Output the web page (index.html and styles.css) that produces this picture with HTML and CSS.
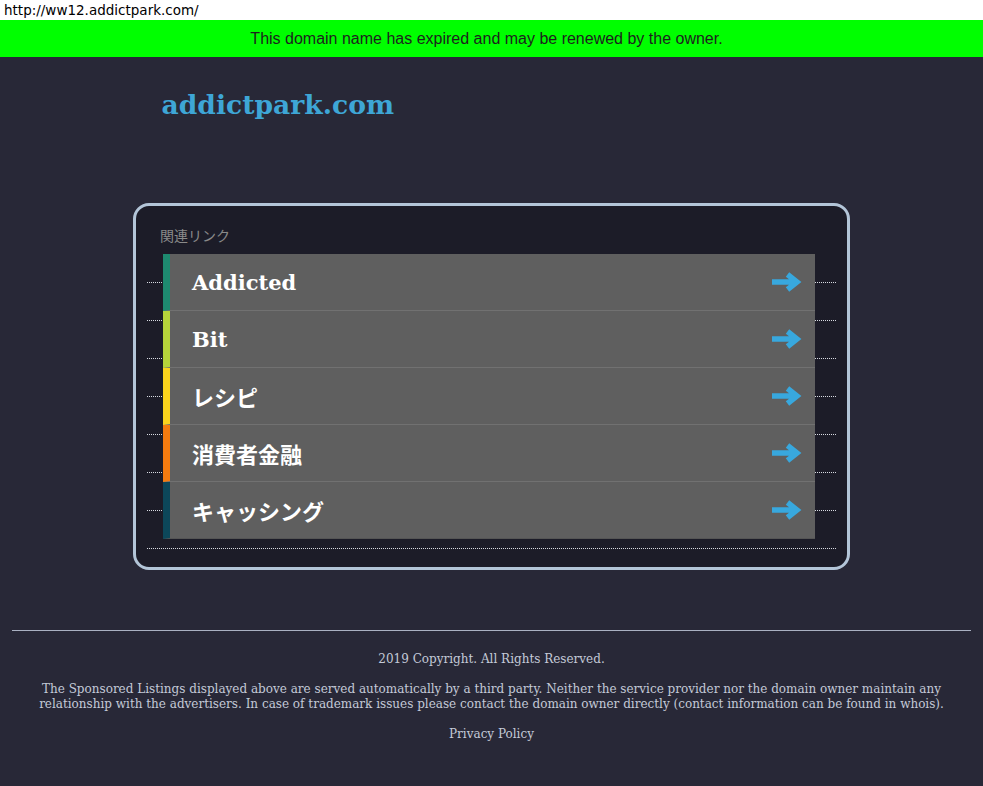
FILE: index.html
```html
<!DOCTYPE html>
<html lang="ja">
<head>
	<meta charset="UTF-8">
	<title>addictpark.com</title>
	<link rel="stylesheet" href="styles.css">
</head>
<body>
	<div class="urlBar">http://ww12.addictpark.com/</div>
	<div class="expired">This domain name has expired and may be renewed by the owner.</div>

	<div class="page">
		<h1 class="domain">addictpark.com</h1>
	</div>

	<div class="box">
		<div class="label">関連リンク</div>
		<div class="links">
			<div class="lines">
				<div class="line"></div>
				<div class="line"></div>
				<div class="line"></div>
				<div class="line"></div>
				<div class="line"></div>
				<div class="line"></div>
				<div class="line"></div>
				<div class="line last"></div>
			</div>
			<div class="rows">
				<a class="row c1" href="#"><span class="text latin">Addicted</span><svg class="arrow" viewBox="0 0 31 20"><path d="M0 10H24M15.5 2.5L25 10L15.5 17.5"/></svg></a>
				<a class="row c2" href="#"><span class="text latin">Bit</span><svg class="arrow" viewBox="0 0 31 20"><path d="M0 10H24M15.5 2.5L25 10L15.5 17.5"/></svg></a>
				<a class="row c3" href="#"><span class="text">レシピ</span><svg class="arrow" viewBox="0 0 31 20"><path d="M0 10H24M15.5 2.5L25 10L15.5 17.5"/></svg></a>
				<a class="row c4" href="#"><span class="text">消費者金融</span><svg class="arrow" viewBox="0 0 31 20"><path d="M0 10H24M15.5 2.5L25 10L15.5 17.5"/></svg></a>
				<a class="row c5" href="#"><span class="text">キャッシング</span><svg class="arrow" viewBox="0 0 31 20"><path d="M0 10H24M15.5 2.5L25 10L15.5 17.5"/></svg></a>
			</div>
		</div>
	</div>

	<div class="footer">
		<p>2019 Copyright. All Rights Reserved.</p>
		<p>The Sponsored Listings displayed above are served automatically by a third party. Neither the service provider nor the domain owner maintain any relationship with the advertisers. In case of trademark issues please contact the domain owner directly (contact information can be found in whois).</p>
		<p><a href="#">Privacy Policy</a></p>
	</div>
</body>
</html>
```

FILE: styles.css
```css
*{
	margin: 0;
	padding: 0;
	box-sizing: border-box;
}
body{
	background-color: #282837;
	font-family: "DejaVu Serif", "Noto Sans CJK JP", serif;
}
.urlBar{
	height: 20px;
	padding-left: 4px;
	background-color: #fff;
	color: #000;
	font-family: "DejaVu Sans", sans-serif;
	font-size: 13.5px;
	line-height: 20px;
}
.expired{
	height: 37px;
	padding-right: 10px;
	background-color: #00ff00;
	color: #1e1e1e;
	font-family: "Liberation Sans", Arial, sans-serif;
	font-size: 16px;
	line-height: 37px;
	text-align: center;
}
.page{
	width: 660px;
	margin: 0 auto;
	padding-top: 32px;
}
.domain{
	color: #3ea6d6;
	font-size: 26.6px;
	line-height: 32px;
	font-weight: bold;
}
.box{
	width: 717px;
	margin: 82px auto 0;
	padding: 19px 11px 18px;
	background-color: #1c1c28;
	border: 3px solid #b3c5d8;
	border-radius: 16px;
}
.label{
	padding-left: 13px;
	margin-bottom: 9px;
	color: #8a8a8a;
	font-family: "Noto Sans CJK JP", sans-serif;
	font-size: 14px;
	line-height: 20px;
}
.links{
	display: grid;
}
.links>.lines,
.links>.rows{
	grid-area: 1 / 1;
}
.lines{
	padding-top: 28px;
}
.line{
	height: 38px;
	border-top: 1px dotted #d8dbe2;
}
.line.last{
	height: 1px;
}
.rows{
	margin: 0 21px 0 16px;
}
.row{
	display: flex;
	align-items: center;
	height: 57px;
	padding-left: 22px;
	padding-right: 12px;
	background-color: #5f5f5f;
	border-left: 7px solid;
	border-bottom: 1px solid #717171;
	color: #fff;
	text-decoration: none;
}
.row:last-child{
	border-bottom-color: #555;
}
.row.c1{ border-left-color: #1e8a70; }
.row.c2{ border-left-color: #b6d43a; }
.row.c3{ border-left-color: #fbd31c; }
.row.c4{ border-left-color: #f47b0f; }
.row.c5{ border-left-color: #0c475a; }
.row>.text{
	font-family: "Noto Sans CJK JP", sans-serif;
	font-size: 22px;
	font-weight: bold;
}
.row>.text.latin{
	font-family: "DejaVu Serif", serif;
	font-size: 21px;
}
.arrow{
	width: 31px;
	height: 20px;
	margin-left: auto;
	fill: none;
	stroke: #38a8de;
	stroke-width: 5.5;
}
.footer{
	margin: 60px 12px 0;
	padding: 21px 26px 0;
	border-top: 1px solid #aab1c2;
	color: #c4cad8;
	font-size: 12px;
	line-height: 15px;
	text-align: center;
}
.footer p{
	margin-bottom: 15px;
}
.footer a{
	color: #c4cad8;
	text-decoration: none;
}
```
